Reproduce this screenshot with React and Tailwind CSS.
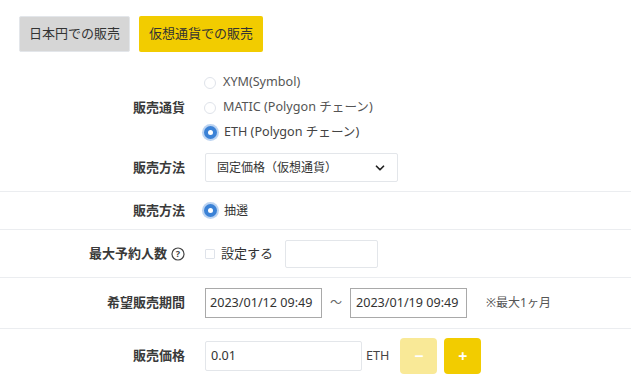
import { ChevronDown } from 'lucide-react';

const font = { fontFamily: '"Noto Sans", "Noto Sans CJK JP", sans-serif' };

function Radio({ checked }) {
  if (checked) {
    return (
      <span className="w-[13px] h-[13px] rounded-full bg-[#3b82d6] shadow-[0_0_0_2px_rgba(59,130,214,0.35)] flex items-center justify-center shrink-0">
        <span className="w-[5px] h-[5px] rounded-full bg-white" />
      </span>
    );
  }
  return <span className="w-[12px] h-[12px] rounded-full border border-[#dfe3ea] bg-white shrink-0" />;
}

function Row({ label, className = '', children }) {
  return (
    <div className={`grid grid-cols-[185px_1fr] gap-x-[19px] items-center border-b border-[#ebedf0] ${className}`}>
      <div className="text-right text-[13px] font-bold text-[#3a3a3a] flex items-center justify-end gap-[4px]">{label}</div>
      <div className="flex items-center">{children}</div>
    </div>
  );
}

export default function App() {
  return (
    <div className="w-[631px] h-[381px] bg-white overflow-hidden text-[#333]" style={font}>
      <div className="flex gap-[9px] pl-[19px] pt-[16px]">
        <button className="h-[36px] px-[9px] bg-[#d6d6d6] border border-[#e3e6ea] rounded-[2px] text-[13px] text-[#333]">日本円での販売</button>
        <button className="h-[36px] px-[10px] bg-[#f2cc00] rounded-[2px] text-[13px] text-[#333]">仮想通貨での販売</button>
      </div>

      <div className="mt-[18px] border-b border-[#ebedf0]">
        <div className="grid grid-cols-[185px_1fr] gap-x-[19px] items-center">
          <div className="text-right text-[13px] font-bold text-[#3a3a3a]">販売通貨</div>
          <div className="flex flex-col text-[12.6px] text-[#444]">
            <label className="h-[25px] flex items-center gap-[7px]"><Radio /><span className="text-[#555]">XYM(Symbol)</span></label>
            <label className="h-[25px] flex items-center gap-[7px]"><Radio /><span className="text-[#555]">MATIC (Polygon チェーン)</span></label>
            <label className="h-[25px] flex items-center gap-[7px]"><Radio checked /><span>ETH (Polygon チェーン)</span></label>
          </div>
        </div>
        <div className="grid grid-cols-[185px_1fr] gap-x-[19px] items-center pt-[8px] pb-[9px]">
          <div className="text-right text-[13px] font-bold text-[#3a3a3a]">販売方法</div>
          <div className="pl-[1px]">
            <div className="w-[193px] h-[29px] border border-[#e3e6ea] rounded-[2px] flex items-center justify-between pl-[11px] pr-[10px] text-[12px]">
              <span>固定価格（仮想通貨）</span>
              <ChevronDown size={14} strokeWidth={3} className="text-[#222]" />
            </div>
          </div>
        </div>
      </div>

      <Row label="販売方法" className="h-[38px]">
        <label className="flex items-center gap-[7px] text-[12px]"><Radio checked /><span>抽選</span></label>
      </Row>

      <Row
        label={
          <>
            <span>最大予約人数</span>
            <svg width="14" height="14" viewBox="0 0 14 14" className="text-[#444]">
              <circle cx="7" cy="7" r="6" fill="none" stroke="currentColor" strokeWidth="1.2" />
              <text x="7" y="10.3" textAnchor="middle" fontSize="9" fontWeight="700" fill="currentColor" style={font}>?</text>
            </svg>
          </>
        }
        className="h-[48px]"
      >
        <label className="flex items-center gap-[6px] text-[13px] pl-[1px]">
          <span className="w-[10px] h-[10px] border border-[#dfe3ea] rounded-[1px] bg-white" />
          <span>設定する</span>
        </label>
        <div className="ml-[12px] w-[93px] h-[28px] border border-[#e3e6ea] rounded-[2px]" />
      </Row>

      <Row label="希望販売期間" className="h-[51px]">
        <div className="ml-[1px] w-[117px] h-[30px] border border-[#a9a9a9] flex items-center pl-[4px] text-[12.6px]">2023/01/12 09:49</div>
        <span className="w-[28px] text-center text-[12px] text-[#666]">～</span>
        <div className="w-[117px] h-[30px] border border-[#a9a9a9] flex items-center pl-[5px] text-[12.6px]">2023/01/19 09:49</div>
        <span className="ml-[19px] text-[12px] text-[#555]">※最大1ヶ月</span>
      </Row>

      <div className="grid grid-cols-[185px_1fr] gap-x-[19px] items-center h-[54px]">
        <div className="text-right text-[13px] font-bold text-[#3a3a3a]">販売価格</div>
        <div className="flex items-center">
          <div className="ml-[1px] w-[157px] h-[30px] border border-[#e3e6ea] rounded-[2px] flex items-center pl-[5px] text-[12.6px]">0.01</div>
          <span className="ml-[4px] text-[12.6px] text-[#444]">ETH</span>
          <button className="ml-[11px] w-[37px] h-[36px] rounded-[4px] bg-[#f9e997] text-white text-[16px] font-bold flex items-center justify-center">−</button>
          <button className="ml-[7px] w-[37px] h-[36px] rounded-[4px] bg-[#f2cc00] text-white text-[16px] font-bold flex items-center justify-center">+</button>
        </div>
      </div>
    </div>
  );
}
